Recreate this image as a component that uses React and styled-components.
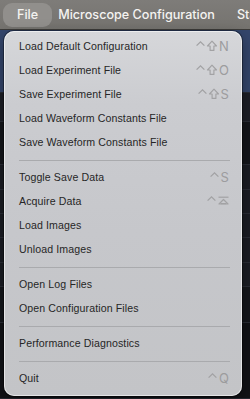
import React from "react";
import styled, { createGlobalStyle } from "styled-components";

const GlobalStyle = createGlobalStyle`
  html, body {
    margin: 0;
    padding: 0;
    background: #16181e;
  }
  body {
    font-family: "Liberation Sans", Arial, sans-serif;
  }
`;

const Screen = styled.div`
  position: relative;
  width: 250px;
  height: 399px;
  overflow: hidden;
  background: #17191f;
`;

const MenuBar = styled.div`
  display: flex;
  align-items: center;
  height: 29px;
  padding-left: 3px;
  gap: 6px;
  background: linear-gradient(#7e7c79, #75736f);
  border-bottom: 1px solid #3c3b39;
  white-space: nowrap;
  overflow: hidden;
`;

const BarItem = styled.div`
  display: flex;
  align-items: center;
  height: 24px;
  padding: 0 ${p => (p.$active ? "14px" : "0")};
  border-radius: 9px;
  background: ${p => (p.$active ? "#918f8c" : "transparent")};
  color: #f4f3f1;
  font-family: "Inter", "Liberation Sans", sans-serif;
  font-size: 12.6px;
  font-weight: 500;
  margin-right: ${p => p.$gap || 0}px;
`;

const Backdrop = styled.div`
  display: flex;
  flex-direction: column;
  height: 369px;
`;

const BackStripe = styled.div`
  height: ${p => p.$h}px;
  background: ${p => p.$bg};
  border-bottom: 1px solid #2a2d36;
`;

const Menu = styled.div`
  position: absolute;
  left: 4px;
  top: 31px;
  width: 238px;
  box-sizing: border-box;
  padding: 3px 0 6px;
  border-radius: 10px;
  background: linear-gradient(
    180deg,
    #d6d7da 0%,
    #cbccd0 20%,
    #c6c7cb 55%,
    #c3c4c7 100%
  );
  box-shadow: inset 0 0 0 1px rgba(255, 255, 255, 0.55),
    0 0 0 1px rgba(0, 0, 0, 0.35), 0 6px 16px rgba(0, 0, 0, 0.4);
`;

const Row = styled.div`
  display: flex;
  align-items: center;
  justify-content: space-between;
  height: 24px;
  padding: 0 13px 0 15px;
  font-size: 10.6px;
  color: #262626;
  letter-spacing: 0.1px;
`;

const Separator = styled.div`
  height: 11px;
  display: flex;
  align-items: center;
  padding: 0 12px 0 15px;
  &::after {
    content: "";
    flex: 1;
    height: 1px;
    margin-top: 1px;
    background: #a9aaad;
  }
`;

const Keys = styled.span`
  display: flex;
  align-items: center;
  gap: 2px;
  color: #9c9c9e;
  font-family: "Inter", "Liberation Sans", sans-serif;
  font-size: 13px;
`;

const Glyph = styled.svg`
  display: block;
  overflow: visible;
`;

const Ctrl = () => (
  <Glyph width="9" height="12" viewBox="0 0 9 12">
    <path d="M0.6 5.6 L4.5 1.8 L8.4 5.6" fill="none" stroke="#a2a2a4" strokeWidth="1.3" />
  </Glyph>
);

const Shift = () => (
  <Glyph width="10" height="12" viewBox="0 0 10 12">
    <path
      d="M5 1.2 L9.5 6 L6.9 6 L6.9 10.4 L3.1 10.4 L3.1 6 L0.5 6 Z"
      fill="none"
      stroke="#a2a2a4"
      strokeWidth="1.15"
      strokeLinejoin="round"
    />
  </Glyph>
);

const Enter = () => (
  <Glyph width="11" height="12" viewBox="0 0 11 12">
    <path d="M0.5 2.2 H10.5" stroke="#a2a2a4" strokeWidth="1.2" />
    <path d="M1 9 L5.5 4.5 L10 9 Z" fill="none" stroke="#a2a2a4" strokeWidth="1.2" strokeLinejoin="round" />
    <path d="M3 8.6 H8" stroke="#a2a2a4" strokeWidth="1.2" />
  </Glyph>
);

const glyphs = { ctrl: Ctrl, shift: Shift, enter: Enter };

const items = [
  { label: "Load Default Configuration", keys: ["ctrl", "shift", "N"] },
  { label: "Load Experiment File", keys: ["ctrl", "shift", "O"] },
  { label: "Save Experiment File", keys: ["ctrl", "shift", "S"] },
  { label: "Load Waveform Constants File" },
  { label: "Save Waveform Constants File" },
  "-",
  { label: "Toggle Save Data", keys: ["ctrl", "S"] },
  { label: "Acquire Data", keys: ["ctrl", "enter"] },
  { label: "Load Images" },
  { label: "Unload Images" },
  "-",
  { label: "Open Log Files" },
  { label: "Open Configuration Files" },
  "-",
  { label: "Performance Diagnostics" },
  "-",
  { label: "Quit", keys: ["ctrl", "Q"] },
];

const stripes = [
  { h: 64, bg: "#34466c" },
  { h: 28, bg: "#1d1f27" },
  { h: 44, bg: "#14161b" },
  { h: 24, bg: "#1b1d24" },
  { h: 24, bg: "#1b1d24" },
  { h: 24, bg: "#1b1d24" },
  { h: 24, bg: "#1b1d24" },
  { h: 24, bg: "#1b1d24" },
  { h: 36, bg: "#15171c" },
  { h: 77, bg: "#121317" },
];

export default function App() {
  return (
    <Screen>
      <GlobalStyle />
      <MenuBar>
        <BarItem $active>File</BarItem>
        <BarItem $gap={16}>Microscope Configuration</BarItem>
        <BarItem>Sta</BarItem>
      </MenuBar>
      <Backdrop>
        {stripes.map((s, i) => (
          <BackStripe key={`stripe-${i}`} $h={s.h} $bg={s.bg} />
        ))}
      </Backdrop>
      <Menu>
        {items.map((item, i) =>
          item === "-" ? (
            <Separator key={`sep-${i}`} />
          ) : (
            <Row key={item.label}>
              <span>{item.label}</span>
              {item.keys && (
                <Keys>
                  {item.keys.map((k, j) => {
                    const G = glyphs[k];
                    return G ? <G key={j} /> : <span key={j}>{k}</span>;
                  })}
                </Keys>
              )}
            </Row>
          )
        )}
      </Menu>
    </Screen>
  );
}
